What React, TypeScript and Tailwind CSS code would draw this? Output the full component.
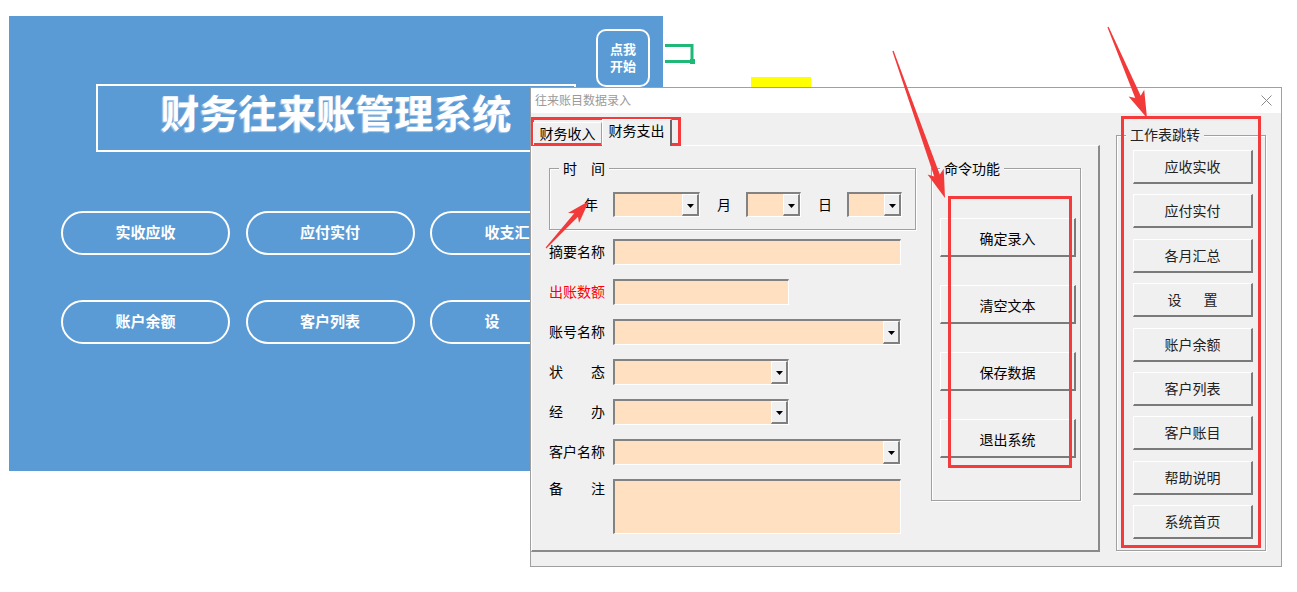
import React from "react";

type Pt = [number, number];

function arrowPoints(
  x1: number,
  y1: number,
  x2: number,
  y2: number,
  L: number,
  W: number,
  w0: number,
  w1: number
): string {
  const dx = x2 - x1;
  const dy = y2 - y1;
  const len = Math.hypot(dx, dy);
  const ux = dx / len;
  const uy = dy / len;
  const nx = -uy;
  const ny = ux;
  const bx = x2 - ux * L;
  const by = y2 - uy * L;
  const cx = x2 - ux * (L + 4);
  const cy = y2 - uy * (L + 4);
  const pts: Pt[] = [
    [x1 + (nx * w0) / 2, y1 + (ny * w0) / 2],
    [bx + (nx * w1) / 2, by + (ny * w1) / 2],
    [cx + (nx * W) / 2, cy + (ny * W) / 2],
    [x2, y2],
    [cx - (nx * W) / 2, cy - (ny * W) / 2],
    [bx - (nx * w1) / 2, by - (ny * w1) / 2],
    [x1 - (nx * w0) / 2, y1 - (ny * w0) / 2],
  ];
  return pts.map((p) => `${p[0].toFixed(1)},${p[1].toFixed(1)}`).join(" ");
}

const ARROWS = [
  arrowPoints(893, 51, 945, 198, 24, 17, 1.2, 6),
  arrowPoints(1108, 27, 1147, 118, 23, 17, 1.2, 6),
  arrowPoints(546, 248, 589, 201, 19, 15, 1.2, 5),
];

function ComboBtn() {
  return (
    <div className="ml-auto flex h-full w-[17px] shrink-0 items-center justify-center border-t border-l border-r-2 border-b-2 border-t-white border-l-white border-r-[#808080] border-b-[#808080] bg-[#f0f0f0] pt-[2px]">
      <svg width="7" height="4" viewBox="0 0 7 4">
        <path d="M0 0H7L3.5 4Z" fill="#000" />
      </svg>
    </div>
  );
}

function Field({ cls, combo }: { cls: string; combo?: boolean }) {
  return (
    <div
      className={`flex shrink-0 border-t-2 border-l-2 border-r border-b border-t-[#828282] border-l-[#828282] border-r-white border-b-white bg-[#ffe0c0] ${cls}`}
    >
      {combo && <ComboBtn />}
    </div>
  );
}

function Label({ text, red }: { text: string[]; red?: boolean }) {
  return (
    <div
      className={`flex w-[56px] shrink-0 justify-between pb-[2px] text-[14px] leading-[18px] ${
        red ? "text-[#ff0000]" : "text-black"
      }`}
    >
      {text.map((t, i) => (
        <span key={i}>{t}</span>
      ))}
    </div>
  );
}

const ROWS: { label: string[]; cls: string; combo?: boolean; red?: boolean }[] = [
  { label: ["摘要名称"], cls: "w-[288px] h-[26px]" },
  { label: ["出账数额"], cls: "w-[176px] h-[26px]", red: true },
  { label: ["账号名称"], cls: "w-[288px] h-[26px]", combo: true },
  { label: ["状", "态"], cls: "w-[176px] h-[26px]", combo: true },
  { label: ["经", "办"], cls: "w-[176px] h-[26px]", combo: true },
  { label: ["客户名称"], cls: "w-[288px] h-[26px]", combo: true },
];

const CMD = ["确定录入", "清空文本", "保存数据", "退出系统"];
const JUMP: string[][] = [
  ["应收实收"],
  ["应付实付"],
  ["各月汇总"],
  ["设", "置"],
  ["账户余额"],
  ["客户列表"],
  ["客户账目"],
  ["帮助说明"],
  ["系统首页"],
];
const PILLS = ["实收应收", "应付实付", "收支汇总", "账户余额", "客户列表", "设　　置"];

export default function App() {
  return (
    <div className="relative h-[592px] w-[1297px] overflow-hidden bg-white font-['Noto_Sans_CJK_SC','Noto_Sans',sans-serif]">
      {/* Excel sheet blue panel */}
      <div className="absolute left-[9px] top-[16px] flex h-[455px] w-[654px] flex-col bg-[#5b9bd5]">
        <div className="ml-[87px] mt-[68px] flex h-[68px] w-[480px] items-center justify-center border-2 border-white pb-[13px]">
          <span className="text-[39px] font-bold leading-none text-white [text-shadow:-1px_1px_1px_rgba(220,235,255,0.6)]">
            财务往来账管理系统
          </span>
        </div>
        <div className="ml-[52px] mt-[59px] grid grid-cols-[169px_169px_169px] gap-x-[15.5px] gap-y-[45px]">
          {PILLS.map((p) => (
            <div
              key={p}
              className="flex h-[44px] w-[169px] items-center justify-center rounded-full border-2 border-white pb-[2px] text-[15px] font-bold text-white"
            >
              {p}
            </div>
          ))}
        </div>
        <div className="absolute left-[587px] top-[13px] flex h-[58px] w-[54px] flex-col items-center justify-center rounded-[10px] border-2 border-white pb-[2px] text-[13px] font-bold leading-[17px] text-white">
          <span>点我</span>
          <span>开始</span>
        </div>
      </div>

      {/* green connector shape */}
      <svg className="absolute left-[665px] top-[44px]" width="30" height="20" viewBox="0 0 30 20">
        <path d="M0 1.5H27V17.5H0" fill="none" stroke="#1fb877" strokeWidth="3" />
        <rect x="25" y="15" width="5" height="5" fill="#1fb877" />
      </svg>

      {/* yellow cell */}
      <div className="absolute left-[751px] top-[77px] h-[12px] w-[60px] bg-[#ffff00]" />

      {/* Dialog window */}
      <div className="absolute left-[530px] top-[87px] flex h-[480px] w-[752px] flex-col border border-[#a0a0a0] bg-[#f0f0f0]">
        <div className="flex h-[25px] shrink-0 items-center justify-between bg-white pl-[4px] pr-[9px]">
          <span className="pb-[1px] text-[12px] leading-none text-[#9a9a9a]">往来账目数据录入</span>
          <svg width="11" height="11" viewBox="0 0 11 11">
            <path d="M0.5 0.5L10.5 10.5M10.5 0.5L0.5 10.5" stroke="#8a8a8a" strokeWidth="1" />
          </svg>
        </div>
        <div className="flex flex-1 flex-row">
          {/* left: tabs + page */}
          <div className="flex w-[569px] flex-col pt-[6px]">
            <div className="relative z-10 flex h-[26px] items-end pl-[2px]">
              <div className="flex h-[23px] w-[69px] items-center justify-center border-t border-l border-r border-t-white border-l-white border-r-[#a0a0a0] pb-[3px] text-[14px] leading-none text-black">
                财务收入
              </div>
              <div className="-mb-[1px] flex h-[27px] w-[70px] items-center justify-center border-t border-l border-r-2 border-t-white border-l-white border-r-[#696969] bg-[#f0f0f0] pb-[6px] text-[14px] leading-none text-black">
                财务支出
              </div>
            </div>
            <div className="flex h-[407px] w-[569px] flex-row border-t border-l border-r-2 border-b-2 border-t-white border-l-white border-r-[#8a8a8a] border-b-[#8a8a8a] pl-[17px] pt-[22px]">
              {/* left column */}
              <div className="flex w-[382px] flex-col">
                <div className="relative h-[62px] w-[367px] border border-[#a0a0a0] shadow-[1px_1px_0_#ffffff,inset_1px_1px_0_#ffffff]">
                  <span className="absolute left-[9px] -top-[10px] bg-[#f0f0f0] px-[4px] text-[14px] leading-[18px] text-black">
                    时　间
                  </span>
                  <div className="flex items-center pl-[34px] pt-[23px] text-[14px] leading-[18px] text-black">
                    <span className="w-[14px] pb-[2px]">年</span>
                    <div className="ml-[15px]">
                      <Field cls="w-[87px] h-[25px]" combo />
                    </div>
                    <span className="ml-[17px] w-[14px] pb-[2px]">月</span>
                    <div className="ml-[15px]">
                      <Field cls="w-[55px] h-[25px]" combo />
                    </div>
                    <span className="ml-[17px] w-[14px] pb-[2px]">日</span>
                    <div className="ml-[15px]">
                      <Field cls="w-[55px] h-[25px]" combo />
                    </div>
                  </div>
                </div>
                <div className="mt-[9px] flex flex-col gap-[14px]">
                  {ROWS.map((r, i) => (
                    <div key={i} className="flex items-center gap-[8px]">
                      <Label text={r.label} red={r.red} />
                      <Field cls={r.cls} combo={r.combo} />
                    </div>
                  ))}
                  <div className="flex items-start gap-[8px]">
                    <Label text={["备", "注"]} />
                    <Field cls="w-[288px] h-[55px]" />
                  </div>
                </div>
              </div>
              {/* command group */}
              <div className="relative h-[333px] w-[150px] border border-[#a0a0a0] shadow-[1px_1px_0_#ffffff,inset_1px_1px_0_#ffffff]">
                <span className="absolute left-[8px] -top-[10px] bg-[#f0f0f0] px-[4px] text-[14px] leading-[18px] text-black">
                  命令功能
                </span>
                <div className="flex flex-col gap-[28px] pl-[8px] pt-[49px]">
                  {CMD.map((c) => (
                    <div
                      key={c}
                      className="flex h-[39px] w-[136px] items-center justify-center border-t border-l border-r-2 border-b-2 border-t-white border-l-white border-r-[#7a7a7a] border-b-[#7a7a7a] bg-[#f0f0f0] pt-[1px] text-[14px] leading-none text-black"
                    >
                      {c}
                    </div>
                  ))}
                </div>
              </div>
            </div>
          </div>
          {/* right group */}
          <div className="relative ml-[16px] mt-[22px] h-[416px] w-[150px] border border-[#a0a0a0] shadow-[1px_1px_0_#ffffff,inset_1px_1px_0_#ffffff]">
            <span className="absolute left-[9px] -top-[11px] bg-[#f0f0f0] px-[4px] text-[14px] leading-[18px] text-[#222]">
              工作表跳转
            </span>
            <div className="flex flex-col gap-[10.4px] pl-[16px] pt-[14px]">
              {JUMP.map((j, i) => (
                <div
                  key={i}
                  className="flex h-[34px] w-[120px] items-center justify-center gap-[22px] border-t border-l border-r-2 border-b-2 border-t-white border-l-white border-r-[#7a7a7a] border-b-[#7a7a7a] bg-[#f0f0f0] pb-[1px] text-[14px] leading-none text-[#222]"
                >
                  {j.map((t, k) => (
                    <span key={k}>{t}</span>
                  ))}
                </div>
              ))}
            </div>
          </div>
        </div>
      </div>

      {/* red annotation boxes */}
      <div className="pointer-events-none absolute left-[531px] top-[117px] h-[29px] w-[150px] border-[3px] border-[#f43a3a]" />
      <div className="pointer-events-none absolute left-[948px] top-[196px] h-[272px] w-[124px] border-[3px] border-[#f43a3a]" />
      <div className="pointer-events-none absolute left-[1121px] top-[116px] h-[432px] w-[140px] border-[3px] border-[#f43a3a]" />

      {/* red arrows */}
      <svg className="pointer-events-none absolute left-0 top-0" width="1297" height="592" viewBox="0 0 1297 592">
        {ARROWS.map((p, i) => (
          <polygon key={i} points={p} fill="#f23a3a" />
        ))}
      </svg>
    </div>
  );
}
